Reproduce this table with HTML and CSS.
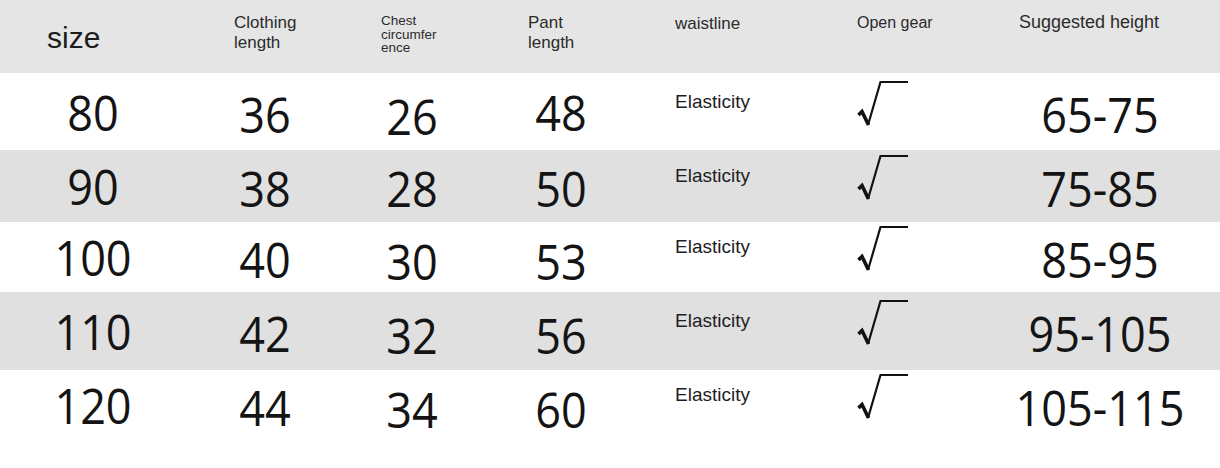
FILE: index.html
```html
<!DOCTYPE html>
<html>
<head>
<meta charset="utf-8">
<link rel="stylesheet" href="styles.css">
</head>
<body>
<div class="table">
  <div class="row head">
    <div class="h h-size">size</div>
    <div class="h h-two">Clothing<br>length</div>
    <div class="h h-chest">Chest<br>circumfer<br>ence</div>
    <div class="h h-two">Pant<br>length</div>
    <div class="h h-waist">waistline</div>
    <div class="h h-gear">Open gear</div>
    <div class="h h-height">Suggested height</div>
  </div>

  <div class="row r1">
    <div class="num">80</div><div class="num low">36</div><div class="num lower">26</div><div class="num">48</div>
    <div class="txt">Elasticity</div>
    <div class="chk"><svg viewBox="0 0 52 48" width="52" height="48"><path d="M1.5 35 L5 31.5 L11.5 45" fill="none" stroke="#111" stroke-width="3.6"/><path d="M11 45 L23.5 2 L51 2" fill="none" stroke="#111" stroke-width="2.2"/></svg></div>
    <div class="num last">65-75</div>
  </div>

  <div class="row r2 gray">
    <div class="num">90</div><div class="num low">38</div><div class="num low">28</div><div class="num low">50</div>
    <div class="txt">Elasticity</div>
    <div class="chk"><svg viewBox="0 0 52 48" width="52" height="48"><path d="M1.5 35 L5 31.5 L11.5 45" fill="none" stroke="#111" stroke-width="3.6"/><path d="M11 45 L23.5 2 L51 2" fill="none" stroke="#111" stroke-width="2.2"/></svg></div>
    <div class="num last">75-85</div>
  </div>

  <div class="row r3">
    <div class="num">100</div><div class="num low">40</div><div class="num lower">30</div><div class="num lower">53</div>
    <div class="txt">Elasticity</div>
    <div class="chk"><svg viewBox="0 0 52 48" width="52" height="48"><path d="M1.5 35 L5 31.5 L11.5 45" fill="none" stroke="#111" stroke-width="3.6"/><path d="M11 45 L23.5 2 L51 2" fill="none" stroke="#111" stroke-width="2.2"/></svg></div>
    <div class="num last">85-95</div>
  </div>

  <div class="row r4 gray">
    <div class="num">110</div><div class="num low">42</div><div class="num lower">32</div><div class="num lower">56</div>
    <div class="txt">Elasticity</div>
    <div class="chk"><svg viewBox="0 0 52 48" width="52" height="48"><path d="M1.5 35 L5 31.5 L11.5 45" fill="none" stroke="#111" stroke-width="3.6"/><path d="M11 45 L23.5 2 L51 2" fill="none" stroke="#111" stroke-width="2.2"/></svg></div>
    <div class="num last">95-105</div>
  </div>

  <div class="row r5">
    <div class="num">120</div><div class="num low">44</div><div class="num lower">34</div><div class="num lower">60</div>
    <div class="txt">Elasticity</div>
    <div class="chk"><svg viewBox="0 0 52 48" width="52" height="48"><path d="M1.5 35 L5 31.5 L11.5 45" fill="none" stroke="#111" stroke-width="3.6"/><path d="M11 45 L23.5 2 L51 2" fill="none" stroke="#111" stroke-width="2.2"/></svg></div>
    <div class="num last">105-115</div>
  </div>
</div>
</body>
</html>
```

FILE: styles.css
```css
html, body {
  margin: 0;
  padding: 0;
  background: #ffffff;
}

body {
  width: 1220px;
  height: 468px;
  overflow: hidden;
  font-family: "Liberation Sans", Arial, sans-serif;
  color: #1a1a1a;
}

.table {
  display: flex;
  flex-direction: column;
}

.row {
  display: grid;
  grid-template-columns: 186px 158px 136px 162px 178px 160px 240px;
  align-items: center;
}

.head {
  height: 73px;
  background: #e5e5e5;
  align-items: start;
}

.gray {
  background: #e0e0e0;
}

.r1 { height: 77px; }
.r2 { height: 72px; }
.r3 { height: 70px; }
.r4 { height: 78px; }
.r5 { height: 70px; }

/* header labels */
.h {
  color: #2b2b2b;
  font-size: 17px;
  line-height: 20px;
  padding-left: 48px;
  padding-top: 13px;
}

.h-size {
  font-size: 30px;
  line-height: 30px;
  padding-left: 47px;
  padding-top: 23px;
  color: #1c1c1c;
}

.h-chest {
  font-size: 13.5px;
  line-height: 13.5px;
  padding-left: 37px;
  padding-top: 14px;
}

.h-waist {
  padding-left: 33px;
  padding-top: 14px;
}

.h-gear {
  font-size: 16px;
  padding-left: 37px;
  padding-top: 13px;
}

.h-height {
  font-size: 18px;
  padding-left: 39px;
  padding-top: 12px;
}

/* numeric cells */
.num {
  font-family: "Open Sans", "Noto Sans", sans-serif;
  font-size: 50px;
  line-height: 50px;
  color: #141414;
  text-align: center;
  transform: scaleX(0.9);
}

.num.low { padding-top: 4px; }
.num.lower { padding-top: 8px; }
.num.last { padding-top: 4px; }

.txt {
  font-size: 19px;
  line-height: 22px;
  color: #1e1e1e;
  padding-left: 33px;
  margin-bottom: 20px;
}

.chk {
  display: flex;
  padding-left: 37px;
  margin-bottom: 16px;
}
```
